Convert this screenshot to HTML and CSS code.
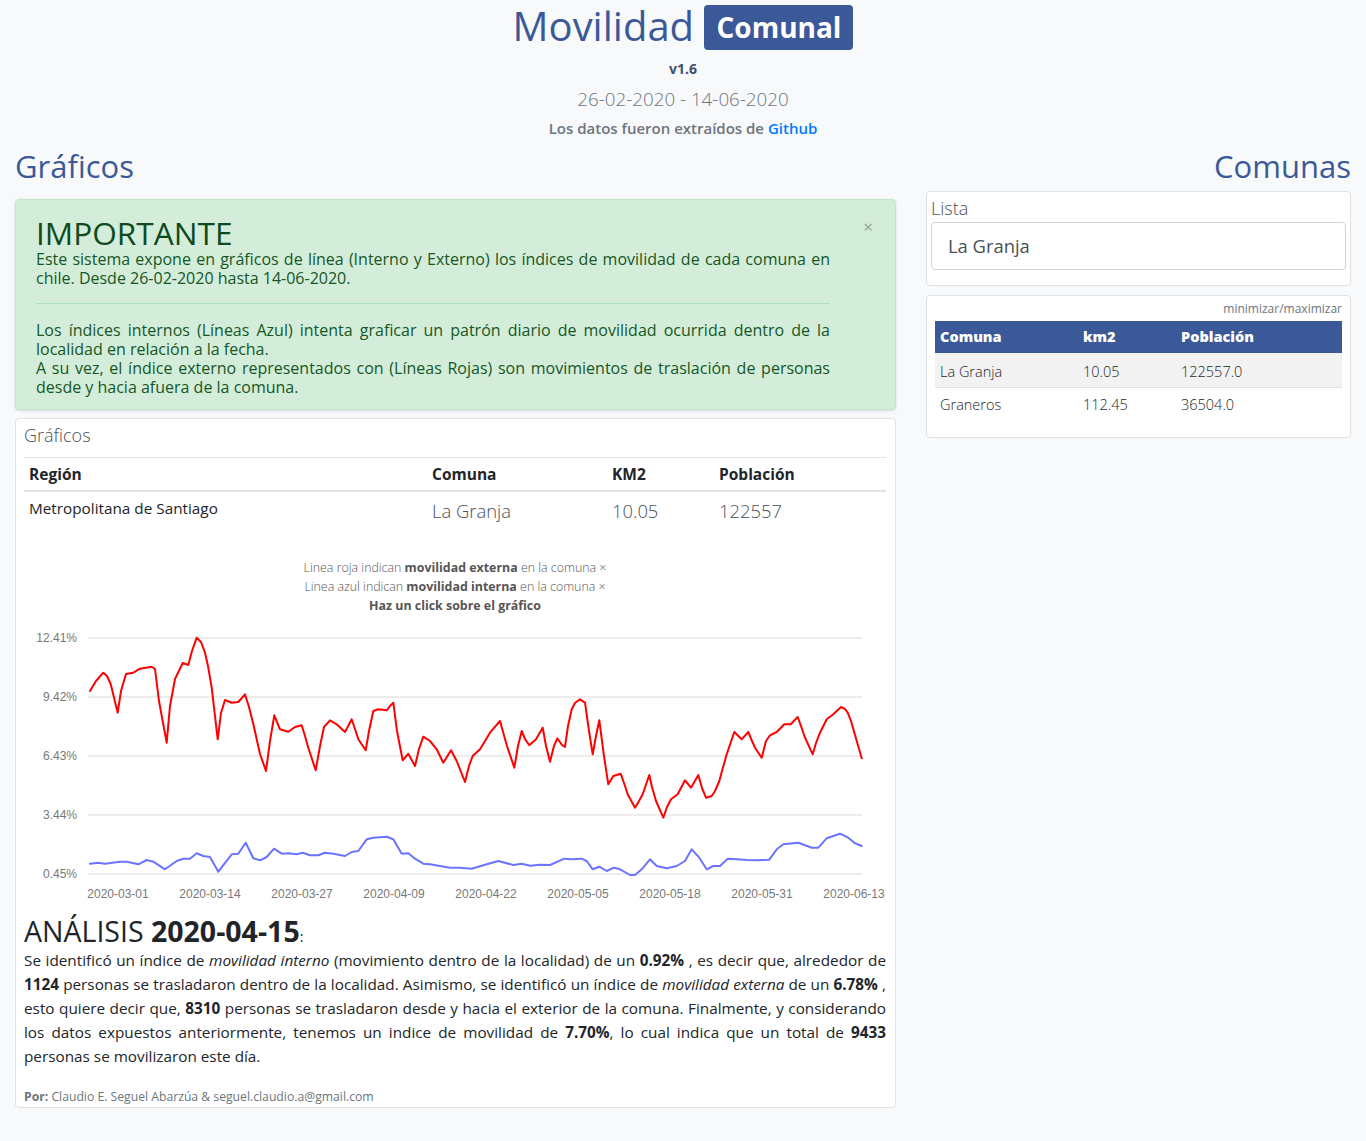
FILE: index.html
```html
<!DOCTYPE html>
<html lang="es">
<head>
<meta charset="utf-8">
<title>Movilidad Comunal</title>
<link rel="stylesheet" href="styles.css">
</head>
<body>
<div class="container">
  <header class="top">
    <h1 class="brand">Movilidad <span class="badge">Comunal</span></h1>
    <div class="version">v1.6</div>
    <div class="range">26-02-2020 - 14-06-2020</div>
    <div class="source">Los datos fueron extraídos de <a href="#" class="link">Github</a></div>
  </header>

  <div class="row">
    <main class="col-left">
      <h2 class="section-title">Gráficos</h2>

      <div class="alert">
        <span class="close">×</span>
        <h1 class="alert-heading">IMPORTANTE</h1>
        <p class="alert-text">Este sistema expone en gráficos de línea (Interno y Externo) los índices de movilidad de cada comuna en chile. Desde 26-02-2020 hasta 14-06-2020.</p>
        <hr class="alert-hr">
        <p class="alert-text">Los índices internos (Líneas Azul) intenta graficar un patrón diario de movilidad ocurrida dentro de la localidad en relación a la fecha.<br>A su vez, el índice externo representados con (Líneas Rojas) son movimientos de traslación de personas desde y hacia afuera de la comuna.</p>
      </div>

      <section class="card chart-card">
        <div class="card-title">Gráficos</div>
        <table class="info-table">
          <thead>
            <tr>
              <th class="c-region">Región</th>
              <th class="c-comuna">Comuna</th>
              <th class="c-km">KM2</th>
              <th class="c-pob">Población</th>
            </tr>
          </thead>
          <tbody>
            <tr>
              <td>Metropolitana de Santiago</td>
              <td class="big">La Granja</td>
              <td class="big">10.05</td>
              <td class="big">122557</td>
            </tr>
          </tbody>
        </table>

        <div class="legend">
          <div>Linea roja indican <b>movilidad externa</b> en la comuna ×</div>
          <div>Linea azul indican <b>movilidad interna</b> en la comuna ×</div>
          <div><b>Haz un click sobre el gráfico</b></div>
        </div>

        <svg class="chart" width="862" height="285" viewBox="0 0 862 285">
          <g transform="translate(-24,-620)">
            <g class="grid">
              <line x1="88" y1="637" x2="862" y2="637"/>
              <line x1="88" y1="696" x2="862" y2="696"/>
              <line x1="88" y1="755" x2="862" y2="755"/>
              <line x1="88" y1="814" x2="862" y2="814"/>
              <line x1="88" y1="873" x2="862" y2="873"/>
            </g>
            <g class="ylab">
              <text x="77" y="641">12.41%</text>
              <text x="77" y="700">9.42%</text>
              <text x="77" y="759">6.43%</text>
              <text x="77" y="818">3.44%</text>
              <text x="77" y="877">0.45%</text>
            </g>
            <g class="xlab">
              <text x="118" y="897">2020-03-01</text>
              <text x="210" y="897">2020-03-14</text>
              <text x="302" y="897">2020-03-27</text>
              <text x="394" y="897">2020-04-09</text>
              <text x="486" y="897">2020-04-22</text>
              <text x="578" y="897">2020-05-05</text>
              <text x="670" y="897">2020-05-18</text>
              <text x="762" y="897">2020-05-31</text>
              <text x="854" y="897">2020-06-13</text>
            </g>
            <polyline class="line-red" points="90,690 96,680 103.3,671.7 107,675 110.7,683 117.7,711.7 121,690 126,673 133.3,671.7 140,667.7 151.7,665.7 155,668 159,700 166.7,741.7 170,705 175,678 182.7,662 188.3,664 192,650 196.7,636.7 201,641 205,651.7 208,665 211.7,686.7 217.7,738.3 221,712 225,699 231.7,701.7 238.3,701 245,693.3 249,706 253.3,723 260,753 266,770 270,740 274.3,714.3 280,728.3 288.3,730.7 295,726 301.7,724.3 305,735 308.3,746.7 315.7,769.3 320,745 324,726 330,719.3 336.7,723.3 345,731 351.7,718.3 355,728 358.3,738.3 365.7,749.3 369,730 373.3,710 378.3,708.3 386.7,709.3 390,705 393.3,701.7 397,730 402.7,759.3 408.3,752.7 415,765 419,748 423.3,735.7 430,740 436.7,748.3 443.3,761.7 451,749.3 456.7,760 465,781 469,765 472.7,755 480,748.3 490,731.7 500,720 507,745 514.3,766.7 518,745 521.7,730 525,738 529.3,744.3 536,738.3 542.7,726.7 546,745 550,760.7 554,745 557.3,737.3 562,744 565,746 568,725 571.7,708.3 575,702 580,698.3 585,701.7 589,730 592.7,753.3 596,735 599.3,719.3 604,755 608.3,783.3 613.3,775 620.7,772.7 624,782 627.7,793.3 635,806.7 639,800 642.7,793.3 649.3,774 652,786 656,800 663.3,816.7 667,806 671,798.3 677.7,793.3 685,779.3 691,786.7 698.3,774 702,787 706,796.7 711.7,795 715,790 719.3,780 722,770 726.7,753.3 734.3,731 741.7,738.3 748.3,731 752,740 755,746.7 761.7,756.7 766,740 770,734.3 776.7,731 784.3,723.3 790.7,723.3 797.7,716 801,725 805,736.7 812.7,753.3 816,742 820,731.7 826.7,718.3 833.3,713.3 841,706 845,708 847.7,711.7 851,720 861.7,757.3"/>
            <polyline class="line-blue" points="90,862.7 98.3,861.7 105,862.7 120,860.7 126.7,860.7 138.3,863.3 146.7,859 153.3,860.7 165,868.3 176.7,860 183.3,857.7 190,857.7 196.7,852.3 203.3,855 210,856 218.3,870.7 231.7,853.3 238.3,852.7 245.7,841.7 253.3,857.3 260,859.3 266.7,856 274,847.7 281.7,852.7 288.3,852.3 296.7,853.3 302.7,851.7 310,854.3 318.3,854.3 325,851.7 333.3,852.7 345,855 351.7,851 358.3,850 366.7,838.3 373.3,836.7 386.7,835.7 393.3,838.3 401.7,852.7 408.3,852.3 415,857.7 423.3,862.7 430,863.3 440,865 450,866.7 460,866.7 471.7,867.7 483.3,864.3 498.3,860 513.3,864 521.7,862.7 530,864.7 540,863.7 550,864 564.3,857.7 571.7,858.3 581.7,857.7 586.7,860 592.7,868.3 599.3,865.7 606.7,870 614,866.7 620,868.3 630,874 635,874 641.7,868.3 650,858.3 656.7,865 666.7,867.3 676.7,865 685,860 691.7,848.3 699.3,856.7 706.7,868.3 713.3,865 720,865 727.7,857.7 736.7,858.3 746.7,859 756.7,859.3 769.3,858.7 776.7,848.3 783.3,843.3 798.3,841.7 811.7,846.7 818.3,846.7 826.7,837.3 840,832.7 848.3,836.7 855,842.3 861.7,845"/>
          </g>
        </svg>

        <h3 class="analysis-title">ANÁLISIS <b>2020-04-15</b><span class="colon">:</span></h3>
        <p class="analysis">Se identificó un índice de <i>movilidad interno</i> (movimiento dentro de la localidad) de un <b>0.92%</b> , es decir que, alrededor de <b>1124</b> personas se trasladaron dentro de la localidad. Asimismo, se identificó un índice de <i>movilidad externa</i> de un <b>6.78%</b> , esto quiere decir que, <b>8310</b> personas se trasladaron desde y hacia el exterior de la comuna. Finalmente, y considerando los datos expuestos anteriormente, tenemos un indice de movilidad de <b>7.70%</b>, lo cual indica que un total de <b>9433</b> personas se movilizaron este día.</p>
        <div class="author"><b>Por:</b> Claudio E. Seguel Abarzúa &amp; seguel.claudio.a@gmail.com</div>
      </section>
    </main>

    <aside class="col-right">
      <h2 class="section-title right">Comunas</h2>

      <div class="card list-card">
        <div class="card-title">Lista</div>
        <div class="select-box">La Granja</div>
      </div>

      <div class="card table-card">
        <div class="toggle">minimizar/maximizar</div>
        <table class="comunas-table">
          <thead>
            <tr>
              <th class="t-com">Comuna</th>
              <th class="t-km">km2</th>
              <th class="t-pob">Población</th>
            </tr>
          </thead>
          <tbody>
            <tr class="striped">
              <td>La Granja</td>
              <td>10.05</td>
              <td>122557.0</td>
            </tr>
            <tr>
              <td>Graneros</td>
              <td>112.45</td>
              <td>36504.0</td>
            </tr>
          </tbody>
        </table>
      </div>
    </aside>
  </div>
</div>
</body>
</html>
```

FILE: styles.css
```css
* { box-sizing: border-box; }

html, body {
  margin: 0;
  padding: 0;
}

body {
  background: #f8f9fa;
  color: #212529;
  font-family: "Open Sans", "Noto Sans", sans-serif;
  font-size: 16px;
  line-height: 1.5;
}

.container {
  padding: 0 15px;
}

/* ---------- header ---------- */
.top {
  text-align: center;
  padding-top: 2px;
}

.brand {
  margin: 0 0 8px;
  font-size: 40px;
  font-weight: 500;
  line-height: 48px;
  color: #3b5998;
}

.badge {
  display: inline-block;
  background: #3b5998;
  color: #fff;
  font-size: 28px;
  font-weight: 700;
  line-height: 1;
  padding: 8px 12px 9px;
  border-radius: 4px;
  vertical-align: 3px;
}

.version {
  font-size: 14px;
  font-weight: 700;
  line-height: 21px;
  color: #3f5173;
}

.range {
  margin-top: 8px;
  font-size: 18.8px;
  font-weight: 300;
  line-height: 24px;
  color: #6c757d;
}

.source {
  margin-top: 5px;
  font-size: 15px;
  font-weight: 600;
  line-height: 24px;
  color: #6c757d;
}

.link {
  color: #007bff;
  text-decoration: none;
}

/* ---------- layout ---------- */
.row {
  display: flex;
  gap: 30px;
  align-items: flex-start;
}

.col-left {
  flex: 0 0 881px;
  min-width: 0;
}

.col-right {
  flex: 1 1 auto;
  min-width: 0;
}

.section-title {
  margin: 7px 0 6px;
  font-size: 31px;
  font-weight: 500;
  line-height: 38px;
  color: #3b5998;
}

.section-title.right {
  text-align: right;
}

/* ---------- alert ---------- */
.alert {
  position: relative;
  margin-top: 14px;
  background: #d4edda;
  border: 1px solid #c3e6cb;
  border-radius: 4px;
  color: #155724;
  padding: 16px 65px 12px 20px;
  box-shadow: 0 1px 3px rgba(0, 0, 0, 0.12);
}

.close {
  position: absolute;
  top: 17px;
  right: 22px;
  font-size: 17px;
  line-height: 20px;
  color: #8fa293;
}

.alert-heading {
  margin: 0;
  font-size: 31.6px;
  font-weight: 500;
  line-height: 34px;
  color: #0f4a1f;
}

.alert-text {
  margin: 0;
  font-size: 16px;
  line-height: 19px;
  text-align: justify;
}

.alert-hr {
  margin: 15px 0 17px;
  border: 0;
  border-top: 1px solid #b1dfbb;
}

/* ---------- cards ---------- */
.card {
  background: #fff;
  border: 1px solid #dfe1e3;
  border-radius: 4px;
}

.chart-card {
  margin-top: 8px;
  padding: 4px 9px 1px 8px;
}

.card-title {
  font-size: 18px;
  font-weight: 300;
  line-height: 24px;
  color: #495057;
}

.info-table {
  width: 100%;
  margin-top: 10px;
  border-collapse: collapse;
}

.info-table th {
  text-align: left;
  font-weight: 700;
  font-size: 15.5px;
  line-height: 24px;
  padding: 4px 5px;
  border-top: 1px solid #dee2e6;
  border-bottom: 2px solid #dee2e6;
}

.info-table td {
  text-align: left;
  vertical-align: top;
  font-size: 15.3px;
  line-height: 24px;
  padding: 4px 5px;
}

.info-table td.big {
  font-size: 18.4px;
  font-weight: 300;
  line-height: 30px;
  color: #495057;
}

.c-region { width: 403px; }
.c-comuna { width: 180px; }
.c-km { width: 107px; }
.c-pob { width: auto; }

.legend {
  margin-top: 28px;
  text-align: center;
  font-size: 12.4px;
  line-height: 19px;
  font-weight: 300;
  color: #555;
}

.legend b {
  font-weight: 700;
  color: #555;
}

.chart {
  display: block;
  margin-top: 6px;
}

.grid line {
  stroke: #ececec;
  stroke-width: 2;
}

.ylab text {
  font-family: "Liberation Sans", Arial, sans-serif;
  font-size: 12px;
  fill: #777;
  text-anchor: end;
}

.xlab text {
  font-family: "Liberation Sans", Arial, sans-serif;
  font-size: 12px;
  fill: #777;
  text-anchor: middle;
}

.line-red,
.line-blue {
  fill: none;
  stroke-width: 2;
  stroke-linejoin: round;
  stroke-linecap: round;
}

.line-red { stroke: #ff0000; }
.line-blue { stroke: #6a74ff; }

.analysis-title {
  margin: 8px 0 0;
  font-size: 28.5px;
  font-weight: 500;
  line-height: 34px;
  color: #212529;
}

.analysis-title b {
  font-weight: 700;
}

.analysis-title .colon {
  font-size: 14px;
  font-weight: 400;
  line-height: 0;
}

.analysis {
  margin: 0;
  font-size: 15.3px;
  line-height: 24px;
  text-align: justify;
}

.analysis b {
  font-weight: 700;
}

.author {
  margin-top: 20px;
  font-size: 12.2px;
  line-height: 18px;
  color: #6c757d;
}

/* ---------- right column ---------- */
.list-card {
  padding: 4px 4px 15px;
}

.select-box {
  margin-top: 2px;
  height: 48px;
  border: 1px solid #ced4da;
  border-radius: 4px;
  padding: 0 16px;
  font-size: 18.4px;
  line-height: 46px;
  color: #495057;
}

.table-card {
  margin-top: 9px;
  padding: 4px 8px 15px;
}

.toggle {
  text-align: right;
  font-size: 12px;
  line-height: 18px;
  color: #6c757d;
}

.comunas-table {
  width: 100%;
  margin-top: 3px;
  border-collapse: collapse;
}

.comunas-table th {
  background: #3b5998;
  color: #fff;
  text-align: left;
  font-size: 14.5px;
  font-weight: 800;
  line-height: 22px;
  padding: 5px 5px;
}

.comunas-table td {
  text-align: left;
  font-size: 14.5px;
  font-weight: 300;
  line-height: 21px;
  padding: 6px 5px 7px;
  color: #212529;
}

.comunas-table tr.striped td {
  background: #f2f2f2;
  border-bottom: 1px solid #dee2e6;
  padding: 8px 5px 5px;
}

.t-com { width: 143px; }
.t-km { width: 98px; }
.t-pob { width: auto; }
```
